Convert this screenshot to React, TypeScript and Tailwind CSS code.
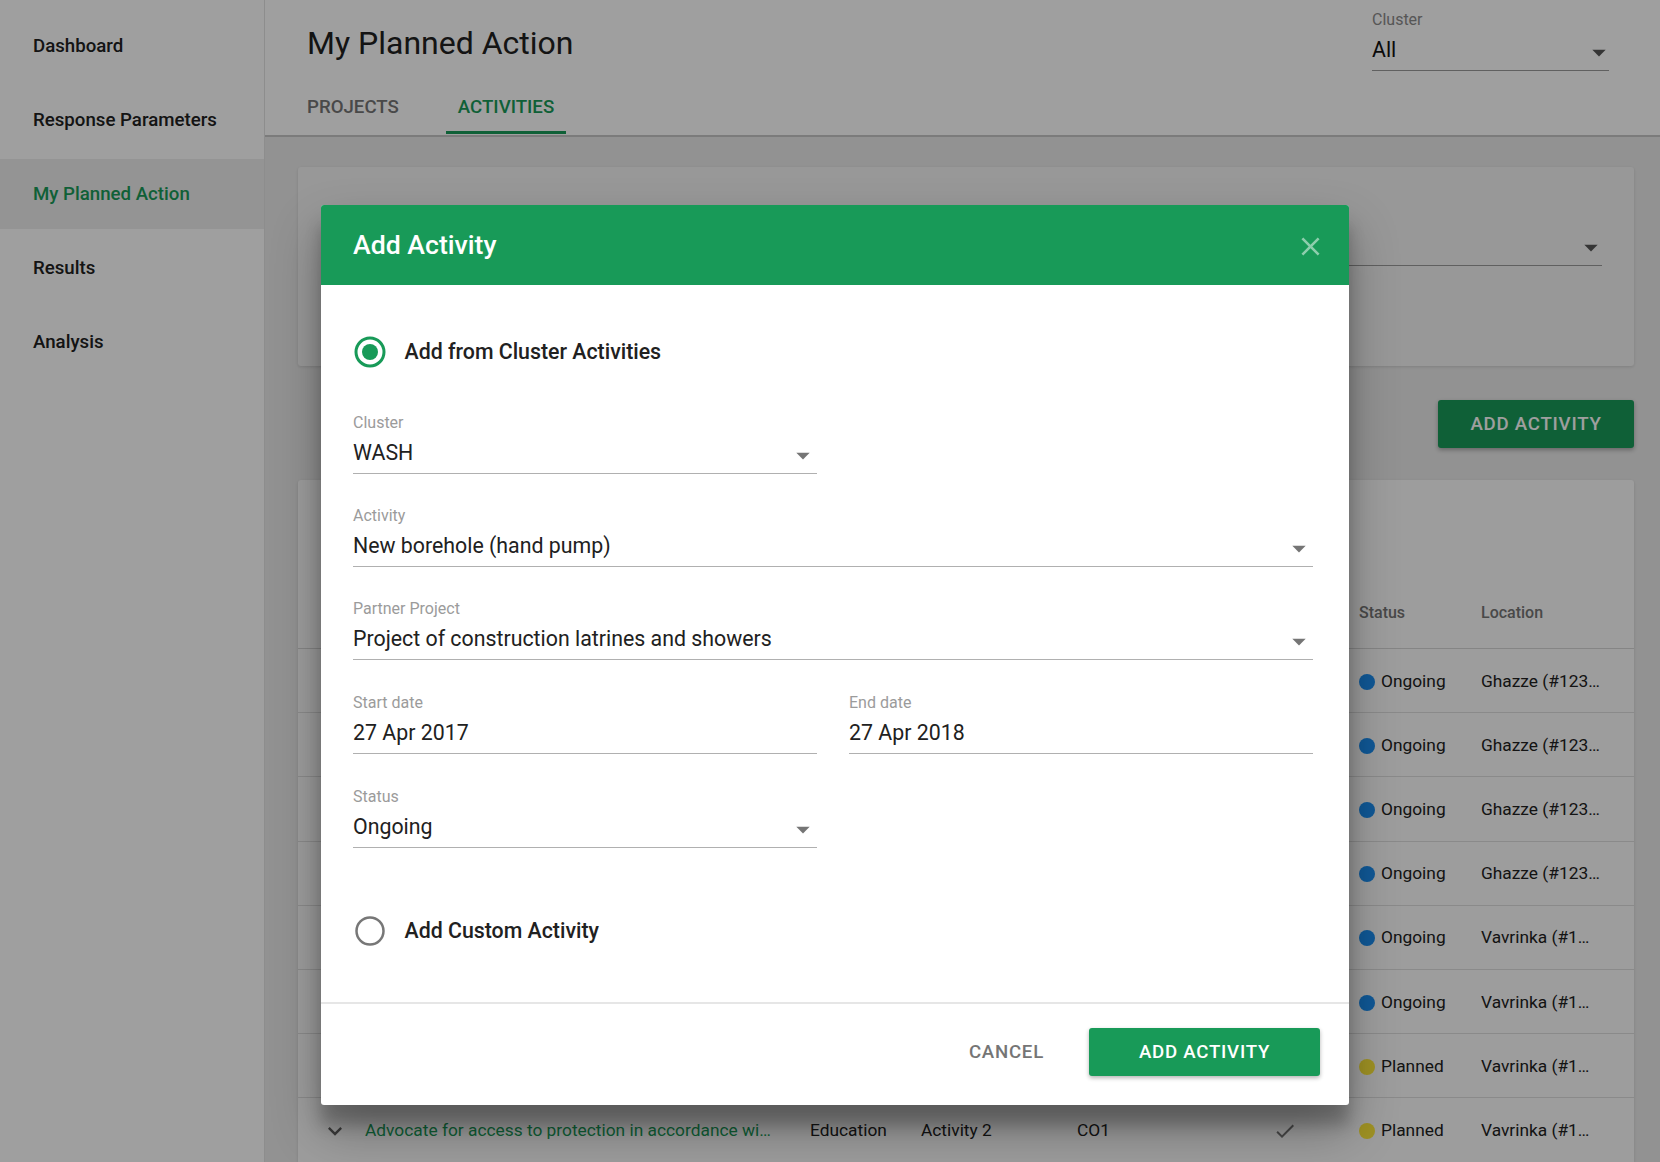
import React from "react";

function Caret({ className = "" }: { className?: string }) {
  return (
    <svg viewBox="0 0 24 24" className={className} aria-hidden="true">
      <path d="M7 10l5 5 5-5z" fill="currentColor" />
    </svg>
  );
}

function Radio({ checked }: { checked: boolean }) {
  return (
    <svg width="32" height="32" viewBox="0 0 32 32" aria-hidden="true">
      {checked ? (
        <>
          <circle cx="16" cy="16" r="14" fill="none" stroke="#189a58" strokeWidth="3" />
          <circle cx="16" cy="16" r="8" fill="#189a58" />
        </>
      ) : (
        <circle cx="16" cy="16" r="13.5" fill="none" stroke="#777777" strokeWidth="2.5" />
      )}
    </svg>
  );
}

type FieldProps = {
  label?: string;
  value?: string;
  arrow?: boolean;
  labelClass: string;
  valueClass: string;
  lineClass: string;
  caretClass?: string;
  className?: string;
};

function Field({ label, value, arrow, labelClass, valueClass, lineClass, caretClass = "", className = "" }: FieldProps) {
  return (
    <div className={className}>
      <div className={`h-[20px] text-[16px] leading-[20px] ${labelClass}`}>{label}</div>
      <div className={`mt-[6px] flex items-center border-b pb-[6px] ${lineClass}`}>
        <div className={`h-[28px] flex-1 truncate text-[21.33px] leading-[28px] ${valueClass}`}>{value}</div>
        {arrow && <Caret className={`-my-[2px] h-[32px] w-[32px] shrink-0 translate-y-[2.5px] ${caretClass}`} />}
      </div>
    </div>
  );
}

const navItems = ["Dashboard", "Response Parameters", "My Planned Action", "Results", "Analysis"];

type Row = {
  title?: string;
  cluster?: string;
  activity?: string;
  objective?: string;
  custom?: boolean;
  status: "Ongoing" | "Planned";
  location: string;
};

const rows: Row[] = [
  { status: "Ongoing", location: "Ghazze (#123…" },
  { status: "Ongoing", location: "Ghazze (#123…" },
  { status: "Ongoing", location: "Ghazze (#123…" },
  { status: "Ongoing", location: "Ghazze (#123…" },
  { status: "Ongoing", location: "Vavrinka (#1…" },
  { status: "Ongoing", location: "Vavrinka (#1…" },
  { status: "Planned", location: "Vavrinka (#1…" },
  {
    title: "Advocate for access to protection in accordance wi…",
    cluster: "Education",
    activity: "Activity 2",
    objective: "CO1",
    custom: true,
    status: "Planned",
    location: "Vavrinka (#1…",
  },
];

export default function App() {
  return (
    <div className="relative flex h-[1162px] w-full overflow-hidden bg-[#eaeaea] font-['Roboto',sans-serif] text-[#212121]">
      {/* Sidebar */}
      <aside className="flex w-[265px] shrink-0 flex-col gap-[4px] border-r border-[#e2e2e2] bg-white pt-[10.5px]">
        {navItems.map((item) => (
          <div
            key={item}
            className={
              item === "My Planned Action"
                ? "flex h-[70px] items-center bg-[#eeeeee] pl-[33px] text-[18.67px] font-medium text-[#189a58]"
                : "flex h-[70px] items-center pl-[33px] text-[18.67px] font-medium text-[#212121]"
            }
          >
            {item}
          </div>
        ))}
      </aside>

      {/* Main */}
      <main className="flex min-w-0 flex-1 flex-col">
        <header className="flex h-[137px] shrink-0 justify-between border-b-2 border-[#c6c6c6] bg-white pl-[42px] pr-[51px]">
          <div className="flex flex-col">
            <h1 className="pt-[23px] text-[32px] font-normal leading-[40px] text-[#212121]">My Planned Action</h1>
            <div className="-ml-[12px] mt-[16px] flex h-[55px] gap-[35px]">
              <div className="flex items-center px-3 text-[18.67px] font-medium text-[#757575]">PROJECTS</div>
              <div className="relative flex items-center px-3 text-[18.67px] font-medium text-[#189a58]">
                ACTIVITIES
                <div className="absolute bottom-0 left-0 right-0 h-[3px] bg-[#189a58]" />
              </div>
            </div>
          </div>
          <Field
            className="w-[237px] pt-[10px]"
            label="Cluster"
            value="All"
            arrow
            labelClass="text-[#8a8a8a]"
            valueClass="text-[#111111]"
            lineClass="border-[#9a9a9a]"
            caretClass="-mr-[6px] text-[#555555]"
          />
        </header>

        <div className="flex flex-1 flex-col pl-[33px] pr-[26px] pt-[30px]">
          {/* Filter card */}
          <div className="grid h-[199px] grid-cols-3 gap-x-[32px] rounded-[3px] bg-[#f4f4f4] px-[32px] pt-[38px] shadow-[0_1px_3px_rgba(0,0,0,0.12)]">
            <Field arrow labelClass="text-[#8a8a8a]" valueClass="text-[#111111]" lineClass="border-[#9a9a9a]" caretClass="-mr-[5px] text-[#555555]" />
            <Field arrow labelClass="text-[#8a8a8a]" valueClass="text-[#111111]" lineClass="border-[#9a9a9a]" caretClass="-mr-[5px] text-[#555555]" />
            <Field arrow labelClass="text-[#8a8a8a]" valueClass="text-[#111111]" lineClass="border-[#9a9a9a]" caretClass="-mr-[5px] text-[#555555]" />
          </div>

          <div className="mt-[34px] flex justify-end">
            <button className="h-[48px] w-[196px] rounded-[3px] bg-[#189a58] text-[18.67px] font-medium tracking-[0.75px] text-white shadow-[0_2px_4px_rgba(0,0,0,0.3)]">
              ADD ACTIVITY
            </button>
          </div>

          {/* Table card */}
          <div className="mt-[32px] flex-1 rounded-t-[3px] bg-[#fcfcfc] shadow-[0_1px_3px_rgba(0,0,0,0.12)]">
            <div className="h-[97px]" />
            <div className="flex h-[72px] items-center border-b border-[#d6d6d6] pl-[21px] pt-[1px] text-[16px] font-medium text-[#757575]">
              <div className="w-[32px]" />
              <div className="ml-[14px] w-[445px]" />
              <div className="w-[111px]" />
              <div className="w-[156px]" />
              <div className="w-[188px]" />
              <div className="w-[40px]" />
              <div className="w-[176px] pl-[54px]">Status</div>
              <div className="flex-1">Location</div>
            </div>
            {rows.map((r, i) => (
              <div
                key={i}
                className="flex h-[64.2px] items-center border-b border-[#dedede] pl-[21px] pt-[2px] text-[17.33px] text-[#212121]"
              >
                <div className="flex w-[32px] justify-center text-[#616161]">
                  {r.title && (
                    <svg width="28" height="28" viewBox="0 0 24 24" aria-hidden="true">
                      <path d="M16.59 8.59L12 13.17 7.41 8.59 6 10l6 6 6-6z" fill="currentColor" />
                    </svg>
                  )}
                </div>
                <div className="ml-[14px] w-[445px] truncate text-[#189a58]">{r.title}</div>
                <div className="w-[111px]">{r.cluster}</div>
                <div className="w-[156px]">{r.activity}</div>
                <div className="w-[188px]">{r.objective}</div>
                <div className="flex w-[40px] justify-center text-[#757575]">
                  {r.custom && (
                    <svg width="24" height="24" viewBox="0 0 24 24" aria-hidden="true">
                      <path d="M9 16.17L4.83 12l-1.42 1.41L9 19 21 7l-1.41-1.41z" fill="currentColor" />
                    </svg>
                  )}
                </div>
                <div className="flex w-[176px] items-center gap-[6px] pl-[54px]">
                  <span
                    className={
                      r.status === "Ongoing"
                        ? "h-[16px] w-[16px] rounded-full bg-[#1a8ef0]"
                        : "h-[16px] w-[16px] rounded-full bg-[#fde83a]"
                    }
                  />
                  <span>{r.status}</span>
                </div>
                <div className="flex-1 whitespace-nowrap">{r.location}</div>
              </div>
            ))}
          </div>
        </div>
      </main>

      {/* Backdrop */}
      <div className="absolute inset-0 bg-[rgba(0,0,0,0.375)]" />

      {/* Dialog */}
      <div className="absolute left-[321px] top-[205px] w-[1028px] overflow-hidden rounded-[3px] bg-white shadow-[0_25px_50px_rgba(0,0,0,0.30),0_20px_16px_rgba(0,0,0,0.22)]">
        <div className="flex h-[80px] items-center justify-between bg-[#189a58] pl-[32px] pr-[23px]">
          <h2 className="text-[26.67px] font-medium leading-[32px] text-white">Add Activity</h2>
          <svg width="31" height="31" viewBox="0 0 24 24" className="translate-y-[1px] text-[rgba(255,255,255,0.5)]" aria-hidden="true">
            <path
              d="M19 6.41L17.59 5 12 10.59 6.41 5 5 6.41 10.59 12 5 17.59 6.41 19 12 13.41 17.59 19 19 17.59 13.41 12z"
              fill="currentColor"
            />
          </svg>
        </div>

        <div className="pb-[38.5px] pl-[32px] pr-[36px] pt-[35px]">
          <div className="flex h-[64px] items-center gap-[19px] pl-[0.5px]">
            <Radio checked />
            <span className="text-[21.33px] font-medium text-[#212121]">Add from Cluster Activities</span>
          </div>

          <div className="mt-[29px] w-[464px]">
            <Field label="Cluster" value="WASH" arrow labelClass="text-[#9b9b9b]" valueClass="text-[#212121]" lineClass="border-[#b0b0b0]" caretClass="-mr-[2px] text-[#757575]" />
          </div>
          <Field className="mt-[31.5px]" label="Activity" value="New borehole (hand pump)" arrow labelClass="text-[#9b9b9b]" valueClass="text-[#212121]" lineClass="border-[#b0b0b0]" caretClass="-mr-[2px] text-[#757575]" />
          <Field className="mt-[32.5px]" label="Partner Project" value="Project of construction latrines and showers" arrow labelClass="text-[#9b9b9b]" valueClass="text-[#212121]" lineClass="border-[#b0b0b0]" caretClass="-mr-[2px] text-[#757575]" />
          <div className="mt-[32.5px] grid grid-cols-2 gap-x-[32px]">
            <Field label="Start date" value="27 Apr 2017" labelClass="text-[#9b9b9b]" valueClass="text-[#212121]" lineClass="border-[#b0b0b0]" />
            <Field label="End date" value="27 Apr 2018" labelClass="text-[#9b9b9b]" valueClass="text-[#212121]" lineClass="border-[#b0b0b0]" />
          </div>
          <div className="mt-[33px] w-[464px]">
            <Field label="Status" value="Ongoing" arrow labelClass="text-[#9b9b9b]" valueClass="text-[#212121]" lineClass="border-[#b0b0b0]" caretClass="-mr-[2px] text-[#757575]" />
          </div>

          <div className="mt-[51.5px] flex h-[64px] items-center gap-[19px] pl-[0.5px]">
            <Radio checked={false} />
            <span className="text-[21.33px] font-medium text-[#212121]">Add Custom Activity</span>
          </div>
        </div>

        <div className="h-[2px] bg-[#e6e6e6]" />

        <div className="flex items-center justify-end gap-[24px] pb-[29px] pr-[29px] pt-[24.5px]">
          <button className="h-[48px] px-[21px] text-[18.67px] font-medium tracking-[0.75px] text-[#757575]">CANCEL</button>
          <button className="h-[48px] w-[231px] rounded-[3px] bg-[#189a58] text-[18.67px] font-medium tracking-[0.75px] text-white shadow-[0_2px_4px_rgba(0,0,0,0.3)]">
            ADD ACTIVITY
          </button>
        </div>
      </div>
    </div>
  );
}
